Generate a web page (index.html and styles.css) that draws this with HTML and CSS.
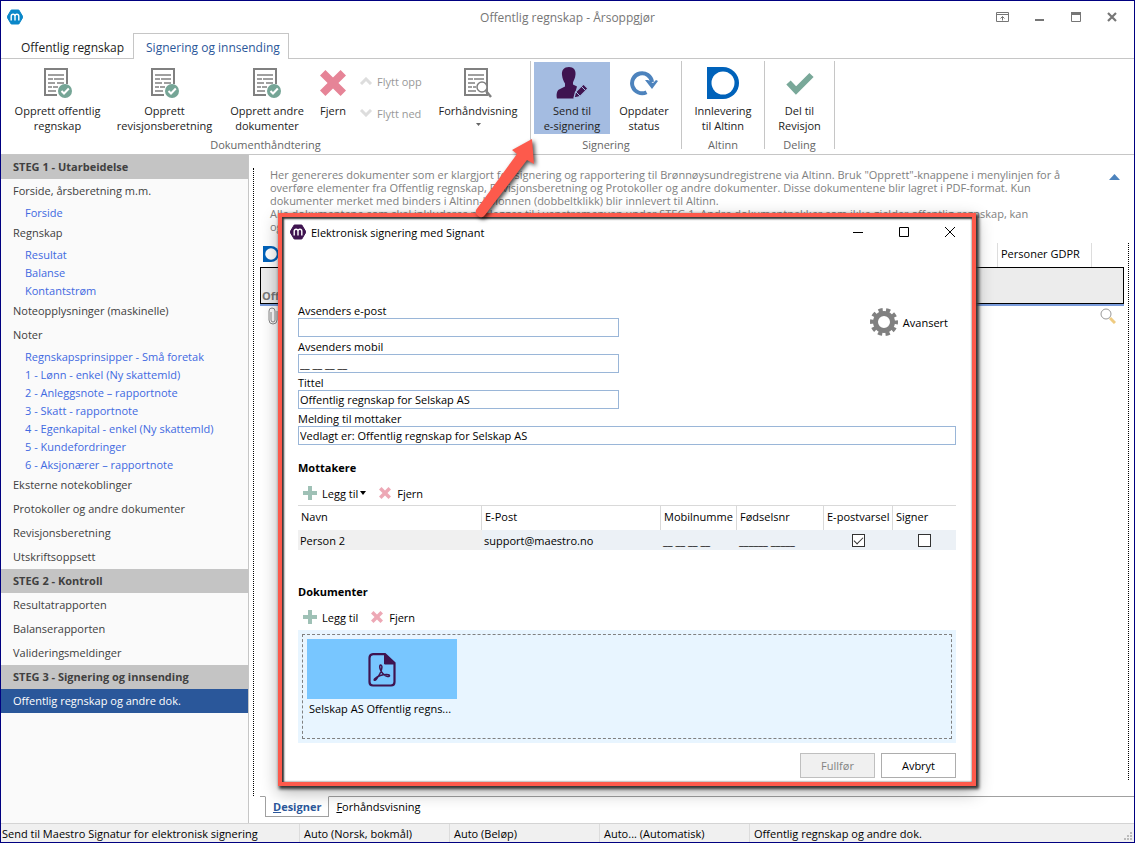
FILE: index.html
```html
<!DOCTYPE html>
<html lang="no">
<head>
    <meta charset="UTF-8">
    <meta name="viewport" content="width=device-width, initial-scale=1.0">
    <title>Offentlig regnskap - Årsoppgjør</title>
    <link rel="stylesheet" href="styles.css">
</head>
<body>
    <!-- shared icons -->
    <svg class="icon-defs" width="0" height="0">
        <symbol id="logo" viewBox="0 0 16 16">
            <path d="M4.2 1h7.6L16 8l-4.200 7H4.200L0 8z" fill="currentColor" stroke="currentColor" stroke-linejoin="round"/>
            <path d="M4.200 11.500V7.200q0-1.900 1.900-1.900T8 7.200v4.300V7.200q0-1.900 1.900-1.900t1.900 1.900v4.300" fill="none" stroke="#fff" stroke-width="1.400"/>
        </symbol>
        <symbol id="doc-check" viewBox="0 0 28 30">
            <path d="M13 27H1V1h22v15" fill="none" stroke="#808080" stroke-width="2"/>
            <path d="M4 7h16M4 11h5M10 11h10M4 15h7M13 15h7M4 19h4M9 19h5M4 23h8" stroke="#808080" stroke-width="1.500"/>
            <circle cx="21" cy="23" r="7" fill="#75a596"/>
            <path d="M17.500 23l2.500 2.500 4.800-5" fill="none" stroke="#fff" stroke-width="2"/>
        </symbol>
        <symbol id="cross" viewBox="0 0 24 24">
            <path d="M5 0l7 7 7-7 5 5-7 7 7 7-5 5-7-7-7 7-5-5 7-7-7-7z" fill="#e68497"/>
        </symbol>
        <symbol id="plus" viewBox="0 0 14 14">
            <path d="M5 0h4v5h5v4H9v5H5V9H0V5h5z" fill="#9fc1b6"/>
        </symbol>
        <symbol id="altinn" viewBox="0 0 32 32">
            <path d="M0 0h16a16 16 0 0 1 0 32H0z" fill="#0062ba"/>
            <circle cx="16" cy="16" r="11.500" fill="#fff"/>
        </symbol>
    </svg>

    <div class="window">
        <header class="titlebar">
            <svg class="logo"><use href="#logo"/></svg>
            <h1>Offentlig regnskap - Årsoppgjør</h1>
            <div class="window-controls">
                <button type="button" aria-label="Skjul båndet">
                    <svg width="14" height="12" viewBox="0 0 14 12" fill="none" stroke="#767676"><path d="M.5 1.500h12v9H.500zM0 3.500h13M6.500 9.500V5.500M4.500 7.500l2-2 2 2"/></svg>
                </button>
                <button type="button" aria-label="Minimer">
                    <svg width="12" height="12" viewBox="0 0 12 12"><path d="M1 8h9v2H1z" fill="#767676"/></svg>
                </button>
                <button type="button" aria-label="Maksimer">
                    <svg width="12" height="12" viewBox="0 0 12 12"><path d="M1.500 1.500h9v9h-9z" fill="none" stroke="#767676"/><path d="M1 1h10v3H1z" fill="#767676"/></svg>
                </button>
                <button type="button" aria-label="Lukk">
                    <svg width="12" height="12" viewBox="0 0 12 12"><path d="M2 2l8 8M10 2l-8 8" stroke="#767676" stroke-width="2.200"/></svg>
                </button>
            </div>
        </header>

        <nav class="ribbon-tabs">
            <a href="#" class="ribbon-tab">Offentlig regnskap</a>
            <a href="#" class="ribbon-tab active">Signering og innsending</a>
            <span class="tab-fill"></span>
        </nav>

        <div class="ribbon">
            <section class="group">
                <div class="group-tools">
                    <button type="button" class="tool tool-xl">
                        <svg width="28" height="30"><use href="#doc-check"/></svg>
                        <span>Opprett offentlig<br>regnskap</span>
                    </button>
                    <button type="button" class="tool tool-xl">
                        <svg width="28" height="30"><use href="#doc-check"/></svg>
                        <span>Opprett<br>revisjonsberetning</span>
                    </button>
                    <button type="button" class="tool tool-lg">
                        <svg width="28" height="30"><use href="#doc-check"/></svg>
                        <span>Opprett andre<br>dokumenter</span>
                    </button>
                    <button type="button" class="tool tool-xs">
                        <svg width="26" height="30" viewBox="0 0 26 30"><use href="#cross" y="2" width="26" height="26"/></svg>
                        <span>Fjern</span>
                    </button>
                    <div class="move-tools">
                        <button type="button" disabled>
                            <svg width="14" height="8" viewBox="0 0 14 8"><path d="M2 7l5-5 5 5" fill="none" stroke="#ddd" stroke-width="3"/></svg>
                            Flytt opp
                        </button>
                        <button type="button" disabled>
                            <svg width="14" height="8" viewBox="0 0 14 8"><path d="M2 1l5 5 5-5" fill="none" stroke="#ddd" stroke-width="3"/></svg>
                            Flytt ned
                        </button>
                    </div>
                    <button type="button" class="tool tool-lg">
                        <svg width="28" height="30" viewBox="0 0 28 30">
                            <path d="M1 1h22v26H1z" fill="none" stroke="#808080" stroke-width="2"/>
                            <path d="M4 7h16M4 11h5M10 11h10M4 15h7M4 19h4M9 19h3M4 23h8" stroke="#808080" stroke-width="1.500"/>
                            <circle cx="18" cy="19" r="5" fill="#fff" stroke="#808080" stroke-width="1.500"/>
                            <path d="M22 23l5 6" stroke="#808080" stroke-width="2.500"/>
                        </svg>
                        <span>Forhåndvisning</span>
                        <svg width="5" height="12" viewBox="0 0 5 12"><path d="M0 5h5L2.500 8z" fill="#666"/></svg>
                    </button>
                </div>
                <h2>Dokumenthåndtering</h2>
            </section>
            <section class="group">
                <div class="group-tools">
                    <button type="button" class="tool tool-md selected">
                        <svg width="34" height="32" viewBox="0 0 34 32">
                            <path d="M14 0c4.500 0 7 3 6.500 7.500-.3 4-2 6-2.500 8v2l4 2-2 7-1 5H2c-1-4 0-8 2-9l6-3v-3C8.500 14 7.500 12 7 8 6.500 3 9 0 14 0z" fill="#3f1450"/>
                            <path d="M19 31l1.500-6 8-8 4.500 4.500-8 8z" fill="#3f1450" stroke="#a4bce1" stroke-width="1.200"/>
                            <path d="M26 19l4.500 4.500M21 25l4 4" stroke="#a4bce1"/>
                        </svg>
                        <span>Send til<br>e-signering</span>
                    </button>
                    <button type="button" class="tool tool-sm">
                        <svg width="28" height="26" viewBox="0 0 28 26"><path d="M16.500 22.200A10 10 0 1 1 22 12" fill="none" stroke="#4d83bd" stroke-width="4"/><path d="M15 10l7 9 6-8-2-1-3 3-5-3z" fill="#4d83bd"/></svg>
                        <span>Oppdater<br>status</span>
                    </button>
                </div>
                <h2>Signering</h2>
            </section>
            <section class="group">
                <div class="group-tools">
                    <button type="button" class="tool tool-md">
                        <svg width="32" height="32"><use href="#altinn"/></svg>
                        <span>Innlevering<br>til Altinn</span>
                    </button>
                </div>
                <h2>Altinn</h2>
            </section>
            <section class="group">
                <div class="group-tools">
                    <button type="button" class="tool tool-share">
                        <svg width="28" height="26" viewBox="0 0 28 26"><path d="M2.500 12.500l7.500 8L25.500 5" fill="none" stroke="#79a899" stroke-width="6"/></svg>
                        <span>Del til<br>Revisjon</span>
                    </button>
                </div>
                <h2>Deling</h2>
            </section>
        </div>

        <div class="main">
            <nav class="sidebar">
                <h3>STEG 1 - Utarbeidelse</h3>
                <a href="#">Forside, årsberetning m.m.</a>
                <a href="#" class="sub">Forside</a>
                <a href="#">Regnskap</a>
                <a href="#" class="sub">Resultat</a>
                <a href="#" class="sub">Balanse</a>
                <a href="#" class="sub">Kontantstrøm</a>
                <a href="#">Noteopplysninger (maskinelle)</a>
                <a href="#">Noter</a>
                <a href="#" class="sub">Regnskapsprinsipper - Små foretak</a>
                <a href="#" class="sub">1 - Lønn - enkel (Ny skattemld)</a>
                <a href="#" class="sub">2 - Anleggsnote – rapportnote</a>
                <a href="#" class="sub">3 - Skatt - rapportnote</a>
                <a href="#" class="sub">4 - Egenkapital - enkel (Ny skattemld)</a>
                <a href="#" class="sub">5 - Kundefordringer</a>
                <a href="#" class="sub">6 - Aksjonærer – rapportnote</a>
                <a href="#">Eksterne notekoblinger</a>
                <a href="#">Protokoller og andre dokumenter</a>
                <a href="#">Revisjonsberetning</a>
                <a href="#">Utskriftsoppsett</a>
                <h3>STEG 2 - Kontroll</h3>
                <a href="#">Resultatrapporten</a>
                <a href="#">Balanserapporten</a>
                <a href="#">Valideringsmeldinger</a>
                <h3>STEG 3 - Signering og innsending</h3>
                <a href="#" class="current">Offentlig regnskap og andre dok.</a>
            </nav>

            <main class="content">
                <div class="designer">
                    <div class="intro">
                        <p>Her genereres dokumenter som er klargjort for signering og rapportering til Brønnøysundregistrene via Altinn. Bruk "Opprett"-knappene i menylinjen for å<br>
                        overføre elementer fra Offentlig regnskap, Revisjonsberetning og Protokoller og andre dokumenter. Disse dokumentene blir lagret i PDF-format. Kun<br>
                        dokumenter merket med binders i Altinn-kolonnen (dobbeltklikk) blir innlevert til Altinn.<br>
                        Alle dokumentene som skal inkluderes må legges til i venstremenyen under STEG 1. Andre dokumentpakker som ikke gjelder offentlig regnskap, kan<br>
                        også legges til.</p>
                        <button type="button" aria-label="Skjul tekst">
                            <svg width="11" height="6" viewBox="0 0 11 6"><path d="M0 6l5.500-6L11 6z" fill="#4d83bd"/></svg>
                        </button>
                    </div>
                    <div class="grid-area">
                        <table class="documents">
                            <thead>
                                <tr>
                                    <th><svg width="16" height="16"><use href="#altinn"/></svg></th>
                                    <th class="gdpr">Personer GDPR</th>
                                    <th class="action"></th>
                                </tr>
                            </thead>
                            <tbody>
                                <tr class="document-group">
                                    <td colspan="3">Offentlig regnskap</td>
                                </tr>
                                <tr class="document-row">
                                    <td><svg width="10" height="18" viewBox="0 0 10 18"><path d="M3 5v8q0 2 2 2t2-2V4q0-3-3-3T1 4v9q0 4 4 4t4-4V4" fill="none" stroke="#888"/></svg></td>
                                    <td></td>
                                    <td><svg width="16" height="16" viewBox="0 0 16 16"><path d="M10 10l5 5" stroke="#efcb80" stroke-width="3"/><circle cx="6" cy="6" r="5" fill="#fff" stroke="#999"/></svg></td>
                                </tr>
                            </tbody>
                        </table>
                    </div>
                </div>
                <nav class="view-tabs">
                    <a href="#" class="active"><u>D</u>esigner</a>
                    <a href="#"><u>F</u>orhåndsvisning</a>
                </nav>
            </main>
        </div>

        <footer class="statusbar">
            <span>Send til Maestro Signatur for elektronisk signering</span>
            <span>Auto (Norsk, bokmål)</span>
            <span>Auto (Beløp)</span>
            <span>Auto... (Automatisk)</span>
            <span>Offentlig regnskap og andre dok.</span>
            <svg width="10" height="10" viewBox="0 0 10 10"><path d="M6 0h2v2H6zM3 3h2v2H3zM6 3h2v2H6zM0 6h2v2H0zM3 6h2v2H3zM6 6h2v2H6z" fill="#bbb"/></svg>
        </footer>

        <div class="dialog" role="dialog" aria-labelledby="dialog-title">
            <div class="dialog-title">
                <svg class="logo"><use href="#logo"/></svg>
                <h2 id="dialog-title">Elektronisk signering med Signant</h2>
                <div class="dialog-controls">
                    <button type="button" aria-label="Minimer"><svg width="12" height="12" viewBox="0 0 12 12"><path d="M1 6.500h10" stroke="#000"/></svg></button>
                    <button type="button" aria-label="Maksimer"><svg width="12" height="12" viewBox="0 0 12 12"><path d="M1.500 1.500h9v9h-9z" fill="none" stroke="#000"/></svg></button>
                    <button type="button" aria-label="Lukk"><svg width="12" height="12" viewBox="0 0 12 12"><path d="M1 1l10 10M11 1L1 11" stroke="#000"/></svg></button>
                </div>
            </div>
            <form class="dialog-body">
                <div class="sender">
                    <div class="fields">
                        <label for="email">Avsenders e-post</label>
                        <input type="text" id="email">
                        <label for="mobile">Avsenders mobil</label>
                        <input type="text" id="mobile" value="__ __ __ __">
                        <label for="subject">Tittel</label>
                        <input type="text" id="subject" value="Offentlig regnskap for Selskap AS">
                    </div>
                    <button type="button" class="advanced">
                        <svg width="28" height="28" viewBox="-14 -14 28 28">
                            <circle r="8.500" fill="none" stroke="#808080" stroke-width="5"/>
                            <circle r="12" fill="none" stroke="#808080" stroke-width="4" stroke-dasharray="4.200 3.340" stroke-dashoffset="2.100"/>
                        </svg>
                        Avansert
                    </button>
                </div>
                <div class="fields">
                    <label for="message">Melding til mottaker</label>
                    <input type="text" id="message" value="Vedlagt er: Offentlig regnskap for Selskap AS">
                </div>

                <h3>Mottakere</h3>
                <div class="toolbar">
                    <button type="button">
                        <svg width="14" height="14"><use href="#plus"/></svg>
                        Legg til
                        <svg class="caret" width="6" height="4" viewBox="0 0 6 4"><path d="M0 0h6L3 4z"/></svg>
                    </button>
                    <button type="button"><svg class="faded" width="12" height="12"><use href="#cross"/></svg>Fjern</button>
                </div>
                <table class="recipients">
                    <thead>
                        <tr>
                            <th class="name">Navn</th>
                            <th class="mail">E-Post</th>
                            <th class="phone">Mobilnumme</th>
                            <th class="birth">Fødselsnr</th>
                            <th class="notify">E-postvarsel</th>
                            <th class="sign">Signer</th>
                        </tr>
                    </thead>
                    <tbody>
                        <tr>
                            <td>Person 2</td>
                            <td>support@maestro.no</td>
                            <td>__ __ __ __</td>
                            <td>______ _____</td>
                            <td><input type="checkbox" aria-label="E-postvarsel" checked></td>
                            <td><input type="checkbox" aria-label="Signer"></td>
                        </tr>
                    </tbody>
                </table>

                <h3>Dokumenter</h3>
                <div class="toolbar">
                    <button type="button"><svg width="14" height="14"><use href="#plus"/></svg>Legg til</button>
                    <button type="button"><svg class="faded" width="12" height="12"><use href="#cross"/></svg>Fjern</button>
                </div>
                <div class="dropzone">
                    <div class="dropzone-inner">
                        <figure>
                            <div class="thumb">
                                <svg width="28" height="34" viewBox="0 0 28 34" fill="none" stroke="#3f1450">
                                    <path d="M5 1.200h12L26.500 10v19q0 3.500-3.500 3.500H5q-3.500 0-3.500-3.500V5q0-3.500 3.500-3.800z" stroke-width="2.200"/>
                                    <path d="M16.500 1.500V11h10z" fill="#3f1450"/>
                                    <path d="M13.500 12.500c-1.500-1.500-2.200.5-1.500 3 1 4 4.500 7.500 7.500 8 3 .2 2.500-2 0-2-5-.2-9.500 1.500-12.500 4-2 2 0 2.500 1.500.5 3-4 5.200-9 5.400-11.500.1-1 0-1.700-.4-2z" stroke-width="1.500"/>
                                </svg>
                            </div>
                            <figcaption>Selskap AS Offentlig regns...</figcaption>
                        </figure>
                    </div>
                </div>
                <div class="dialog-buttons">
                    <button type="submit" disabled>Fullfør</button>
                    <button type="button">Avbryt</button>
                </div>
            </form>
        </div>

        <svg class="arrow" width="68" height="90" viewBox="0 0 68 90">
            <path d="M61 5L41 16l5 4L5 76q-1 4 2 6 4 3 7-1L56 26l7 4z" fill="#fd5a4c"/>
        </svg>
    </div>
</body>
</html>
```

FILE: styles.css
```css
* {
    box-sizing: border-box;
}
body {
    margin: 0;
    font-family: "Open Sans", "Noto Sans", sans-serif;
    font-size: 11px;
    line-height: 15px;
    color: #222;
}
h1, h2, h3, p, figure {
    margin: 0;
    font-size: 11px;
    font-weight: normal;
}
button, input {
    font: inherit;
    color: inherit;
}
button {
    padding: 0;
    border: none;
    background: none;
    white-space: nowrap;
}
a {
    color: inherit;
    text-decoration: none;
}
svg {
    display: block;
    flex-shrink: 0;
}
table {
    width: 100%;
    border-collapse: separate;
    border-spacing: 0;
    table-layout: fixed;
}
th, td {
    padding: 0 3px;
    text-align: left;
    font-weight: normal;
    white-space: nowrap;
    overflow: hidden;
}
.icon-defs {
    position: absolute;
}
.window {
    position: relative;
    display: flex;
    flex-direction: column;
    min-height: 100vh;
    border: 1px solid #000080;
    background-color: #fff;
}
.logo {
    width: 16px;
    height: 16px;
    color: #0a87c9;
}

/* Title bar */
.titlebar {
    display: grid;
    grid-template-columns: 1fr auto 1fr;
    align-items: center;
    height: 32px;
    padding: 0 6px;
}
.titlebar h1 {
    color: #767676;
    font-size: 12px;
}
.window-controls {
    display: flex;
    justify-content: flex-end;
    gap: 24px;
    padding-right: 10px;
}

/* Ribbon */
.ribbon-tabs {
    display: flex;
    height: 26px;
    font-size: 12px;
}
.ribbon-tab {
    padding: 7px 9px 0 20px;
    border-bottom: 1px solid #c6c6c6;
    white-space: nowrap;
}
.ribbon-tab.active {
    padding: 6px 8px 0 12px;
    border: 1px solid #c6c6c6;
    border-bottom: none;
    color: #2b579a;
}
.tab-fill {
    flex: 1;
    border-bottom: 1px solid #c6c6c6;
}
.ribbon {
    display: flex;
    height: 96px;
    padding: 2px 0 5px;
    border-bottom: 1px solid #c6c6c6;
}
.group {
    display: flex;
    flex-direction: column;
    padding: 0 3px;
    border-right: 1px solid #c6c6c6;
}
.group-tools {
    display: flex;
    height: 74px;
}
.group h2 {
    margin-top: 3px;
    color: #666;
    text-align: center;
}
.tool {
    display: flex;
    flex-direction: column;
    align-items: center;
    height: 72px;
    margin-top: 1px;
    padding-top: 5px;
    line-height: 15px;
}
.tool > span {
    margin-top: 4px;
}
.tool > svg:first-child {
    height: 32px;
}
.tool.selected {
    background-color: #a4bce1;
}
.tool-xl { width: 107px; }
.tool-lg { width: 98px; }
.tool-md { width: 76px; }
.tool-sm { width: 68px; }
.tool-share { width: 63px; }
.tool-xs { width: 34px; }
.move-tools {
    display: flex;
    flex-direction: column;
    gap: 16px;
    width: 79px;
    padding: 12px 0 0 9px;
}
.move-tools button {
    display: flex;
    align-items: center;
    gap: 4px;
    height: 16px;
    color: #999;
}

/* Sidebar */
.main {
    display: flex;
    flex: 1;
}
.sidebar {
    width: 248px;
    flex-shrink: 0;
    border-right: 1px solid #c6c6c6;
    background-color: #fafafa;
    color: #404040;
}
.sidebar h3, .sidebar a {
    display: block;
    height: 24px;
    padding-left: 12px;
    line-height: 24px;
    white-space: nowrap;
}
.sidebar h3 {
    background-color: #c4c4c4;
    font-weight: bold;
}
.sidebar .sub {
    height: 18px;
    padding-left: 24px;
    line-height: 20px;
    color: #4169e1;
}
.sidebar .current {
    background-color: #2a579a;
    color: #fff;
}

/* Content */
.content {
    display: flex;
    flex: 1;
    flex-direction: column;
    min-width: 0;
    padding: 13px 0 5px 4px;
}
.designer {
    display: flex;
    flex: 1;
    flex-direction: column;
    padding-left: 6px;
    border-left: 1px dotted #000;
}
.intro {
    display: flex;
    justify-content: space-between;
    align-items: flex-start;
    padding: 0 14px 0 10px;
    line-height: 13px;
    color: #808080;
    white-space: nowrap;
}
.intro button {
    margin-top: 6px;
}
.grid-area {
    flex: 1;
    margin: 10px 5px 16px 0;
    padding-right: 4px;
    border-right: 1px dotted #000;
}
.documents th {
    height: 24px;
    padding-bottom: 3px;
    color: #000;
}
.documents .gdpr {
    width: 95px;
    border-left: 1px solid #ddd;
    border-right: 1px solid #ddd;
}
.documents .action {
    width: 32px;
}
.document-group td {
    height: 37px;
    padding: 0 1px;
    border: 1px solid #000;
    box-shadow: 0 2px #7a9cdc;
    background-color: #ececec;
    color: #777;
    font-weight: bold;
    vertical-align: bottom;
}
.document-row td {
    height: 24px;
    padding: 0 8px;
}
.view-tabs {
    display: flex;
    border-top: 1px solid #a0a0a0;
    margin-left: 7px;
    padding-left: 5px;
    color: #000;
}
.view-tabs a {
    height: 21px;
    padding: 2px 7px;
}
.view-tabs .active {
    margin-top: -1px;
    border: 1px solid #a0a0a0;
    border-top-color: #fff;
    background-color: #fff;
    color: #2b579a;
    font-weight: bold;
}

/* Status bar */
.statusbar {
    display: grid;
    grid-template-columns: 298px 150px 150px 150px 1fr auto;
    align-items: end;
    height: 19px;
    border-top: 1px solid #d4d4d4;
    background-color: #f0f0f0;
    color: #000;
}
.statusbar span {
    padding: 2px 1px 1px;
    white-space: nowrap;
}
.statusbar span + span {
    padding-left: 4px;
    border-left: 1px solid #dcdcdc;
}

/* Signing dialog */
.dialog {
    position: absolute;
    top: 212px;
    left: 277px;
    right: 158px;
    border: 4px solid #fd5a4c;
    background-color: #fff;
    box-shadow: inset 1px 1px 2px 1px #333, 2px 2px 3px 1px #333, 0 6px 16px rgba(0, 0, 0, 0.3);
    color: #000;
}
.dialog-title {
    display: flex;
    align-items: center;
    gap: 5px;
    height: 30px;
    padding: 0 16px 0 8px;
}
.dialog-title .logo {
    color: #3f1450;
}
.dialog-controls {
    display: flex;
    gap: 34px;
    margin-left: auto;
}
.dialog-body {
    padding: 54px 16px 4px;
}
.sender {
    display: flex;
    justify-content: space-between;
    align-items: flex-start;
}
.fields {
    display: flex;
    flex-direction: column;
}
.fields label {
    padding-top: 2px;
}
.fields input {
    height: 19px;
    padding: 0 1px;
    border: 1px solid #9ab6d8;
    background-color: #fff;
}
.sender .fields {
    width: 321px;
}
.advanced {
    display: flex;
    align-items: center;
    gap: 5px;
    margin: 7px 8px 0 0;
}
.dialog h3 {
    margin-top: 15px;
    font-weight: bold;
}
.toolbar {
    display: flex;
    gap: 13px;
    margin-top: 7px;
    padding: 3px 5px 4px;
}
.toolbar button {
    display: flex;
    align-items: center;
    gap: 5px;
    height: 16px;
}
.toolbar .caret {
    margin-left: -3px;
}
.toolbar .faded {
    margin-right: 1px;
    opacity: 0.7;
}
.recipients {
    margin-bottom: 34px;
    border-top: 1px solid #d9d9d9;
}
.recipients th {
    height: 24px;
    padding-bottom: 4px;
    border-right: 1px solid #d9d9d9;
}
.recipients th:last-child {
    border-right: none;
}
.recipients td {
    height: 20px;
    padding: 0 2px;
    background-color: #ecf1f6;
}
.recipients td:first-child {
    background-color: #f0f0f0;
}
.recipients .mail { width: 179px; }
.recipients .phone { width: 76px; }
.recipients .birth { width: 87px; }
.recipients .notify { width: 69px; }
.recipients .sign { width: 63px; }
.recipients input {
    display: block;
    appearance: none;
    width: 13px;
    height: 13px;
    margin: 0 auto;
    border: 1px solid #333;
    background-color: #fff;
}
.recipients input:checked::before {
    content: "";
    display: block;
    width: 8px;
    height: 4px;
    margin: 2px 1px;
    border-left: 1px solid #333;
    border-bottom: 1px solid #333;
    transform: rotate(-45deg);
}
.dropzone {
    margin-top: 1px;
    padding: 4px;
    background-color: #e8f5ff;
}
.dropzone-inner {
    height: 105px;
    padding: 4px;
    border: 1px dashed #808080;
}
.dropzone figure {
    width: 150px;
}
.thumb {
    display: flex;
    align-items: center;
    justify-content: center;
    height: 60px;
    padding-top: 2px;
    background-color: #78c6ff;
}
.dropzone figcaption {
    padding: 2px;
    white-space: nowrap;
}
.dialog-buttons {
    display: flex;
    justify-content: flex-end;
    gap: 6px;
    margin-top: 10px;
}
.dialog-buttons button {
    width: 75px;
    height: 25px;
    border: 1px solid #adadad;
    background-color: #fff;
}
.dialog-buttons button:disabled {
    border-color: #bfbfbf;
    background-color: #f0f0f0;
    color: #838383;
}
.arrow {
    position: absolute;
    top: 133px;
    left: 470px;
    filter: drop-shadow(2px 2px 2px rgba(0, 0, 0, 0.7));
}
```
